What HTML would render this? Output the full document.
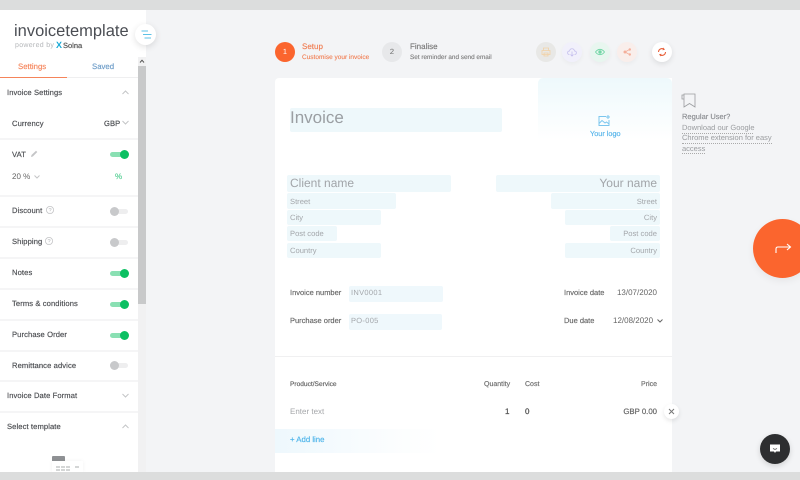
<!DOCTYPE html>
<html><head><meta charset="utf-8">
<style>
*{box-sizing:border-box}
html,body{margin:0;padding:0}
body{width:800px;height:480px;overflow:hidden;background:#f3f4f6;position:relative;font-family:"Liberation Sans",sans-serif;color:#555;text-rendering:geometricPrecision}
#w{position:absolute;left:0;top:0;width:800px;height:480px;filter:blur(.35px)}
.a{position:absolute;white-space:nowrap}
.f{position:absolute;background:#eef8fb;border-radius:2px}
.row{font-size:7.6px;color:#4d4f53;letter-spacing:.1px;line-height:10px;margin-top:1px;-webkit-text-stroke:.18px #4d4f53}
.line{position:absolute;left:0;width:138px;height:2px;background:#f5f5f6}
.tg{position:absolute;left:110px;width:18px;height:5px;border-radius:3px}
.tg i{position:absolute;top:-2px;width:9px;height:9px;border-radius:50%;display:block}
.on{background:#8ae0b3}.on i{left:10px;background:#0cc062}
.off{background:#eeeeef}.off i{left:0;background:#c8c9cb}
.lab{font-size:7.5px;color:#666;line-height:10px;-webkit-text-stroke:.15px #666}
.fl{color:#a3a6aa;font-size:7.6px;line-height:10px;margin-top:1px}
.c{position:absolute;border-radius:50%}
.th{font-size:7px;color:#666;line-height:9px;margin-top:1px;-webkit-text-stroke:.18px #666}
svg{position:absolute;overflow:visible;fill:none}
</style></head>
<body><div id="w">
<!-- frame bars -->
<div class="a" style="left:0;top:0;width:800px;height:10px;background:#dcdddd"></div>
<div class="a" style="left:0;top:472px;width:800px;height:8px;background:#dcdddd;z-index:5"></div>

<!-- sidebar -->
<div class="a" style="left:0;top:10px;width:146px;height:462px;background:#fff"></div>
<div class="a" style="left:138px;top:57px;width:8px;height:415px;background:#f1f1f2"></div>
<div class="a" style="left:138px;top:66px;width:8px;height:238px;background:#c8c9ca"></div>
<svg style="left:139px;top:59px" width="6" height="4"><path d="M1 3.5L3 1.2L5 3.5" stroke="#555" stroke-width="1"/></svg>
<div class="a" style="left:14px;top:22px;font-size:16.5px;color:#4b4e54;line-height:18px">invoicetemplate</div>
<div class="a" style="left:15px;top:41px;font-size:7px;color:#b4b6b9;line-height:9px;letter-spacing:.3px">powered by</div>
<div class="a" style="left:56px;top:40px;font-size:9px;font-weight:bold;color:#17a9d6;line-height:10px">X</div>
<div class="a" style="left:63px;top:41px;font-size:7.5px;color:#555;line-height:9px;-webkit-text-stroke:.2px #555">Solna</div>
<div class="c" style="left:135px;top:24px;width:21px;height:21px;background:#fff;box-shadow:0 2px 7px rgba(0,0,0,.12)"></div>
<svg style="left:141px;top:30px" width="11" height="9"><path d="M0.5 1H7M2 4.5H10.5M3.5 8H10" stroke="#5cc2e6" stroke-width="1"/></svg>

<div class="a" style="left:18px;top:62px;font-size:7.8px;color:#f5845a;line-height:10px;-webkit-text-stroke:.15px #f5845a">Settings</div>
<div class="a" style="left:92px;top:62px;font-size:7.8px;color:#6c9cc8;line-height:10px;-webkit-text-stroke:.15px #6c9cc8">Saved</div>
<div class="a" style="left:0;top:77px;width:138px;height:1px;background:#efeff0"></div>
<div class="a" style="left:0;top:77px;width:67px;height:1px;background:#f5845a"></div>

<div class="a row" style="left:7px;top:87px">Invoice Settings</div>
<svg style="left:122px;top:90px" width="7" height="5"><path d="M.5 4L3.5 1L6.5 4" stroke="#c4c5c7"/></svg>
<div class="a row" style="left:12px;top:118px">Currency</div>
<div class="a row" style="left:104px;top:118px">GBP</div>
<svg style="left:122px;top:120px" width="7" height="5"><path d="M.5 1L3.5 4L6.5 1" stroke="#c4c5c7"/></svg>
<div class="line" style="top:138px"></div>

<div class="a row" style="left:12px;top:149px">VAT</div>
<svg style="left:30px;top:150px" width="8" height="8"><path d="M1 7L1.5 5L6 .8L7.3 2L2.8 6.5Z" fill="#c4c5c7"/></svg>
<div class="tg on" style="top:152px"><i></i></div>
<div class="a" style="left:12px;top:172px;font-size:8px;color:#666;line-height:10px">20 %</div>
<svg style="left:34px;top:175px" width="6" height="4"><path d="M.5 .5L3 3L5.5 .5" stroke="#c4c5c7"/></svg>
<div class="a" style="left:115px;top:172px;font-size:8px;color:#5fd19a;line-height:10px;-webkit-text-stroke:.2px #5fd19a">%</div>
<div class="line" style="top:195px"></div>

<div class="a row" style="left:12px;top:205px">Discount</div>
<svg style="left:46px;top:206px" width="8" height="8"><circle cx="4" cy="4" r="3.6" stroke="#c4c5c7" stroke-width=".8"/><path d="M3 3.2C3 2 5.2 2 5.2 3.2C5.2 4 4 4 4 5M4 5.8V6.3" stroke="#c4c5c7" stroke-width=".7"/></svg>
<div class="tg off" style="top:209px"><i></i></div>
<div class="line" style="top:226px"></div>

<div class="a row" style="left:12px;top:236px">Shipping</div>
<svg style="left:45px;top:237px" width="8" height="8"><circle cx="4" cy="4" r="3.6" stroke="#c4c5c7" stroke-width=".8"/><path d="M3 3.2C3 2 5.2 2 5.2 3.2C5.2 4 4 4 4 5M4 5.8V6.3" stroke="#c4c5c7" stroke-width=".7"/></svg>
<div class="tg off" style="top:240px"><i></i></div>
<div class="line" style="top:257px"></div>

<div class="a row" style="left:12px;top:267px">Notes</div>
<div class="tg on" style="top:271px"><i></i></div>
<div class="line" style="top:288px"></div>

<div class="a row" style="left:12px;top:298px">Terms &amp; conditions</div>
<div class="tg on" style="top:302px"><i></i></div>
<div class="line" style="top:319px"></div>

<div class="a row" style="left:12px;top:329px">Purchase Order</div>
<div class="tg on" style="top:333px"><i></i></div>
<div class="line" style="top:350px"></div>

<div class="a row" style="left:12px;top:360px">Remittance advice</div>
<div class="tg off" style="top:363px"><i></i></div>
<div class="line" style="top:380px"></div>

<div class="a row" style="left:7px;top:390px">Invoice Date Format</div>
<svg style="left:122px;top:393px" width="7" height="5"><path d="M.5 1L3.5 4L6.5 1" stroke="#c4c5c7"/></svg>
<div class="line" style="top:411px"></div>

<div class="a row" style="left:7px;top:421px">Select template</div>
<svg style="left:122px;top:424px" width="7" height="5"><path d="M.5 4L3.5 1L6.5 4" stroke="#c4c5c7"/></svg>
<div class="a" style="left:52px;top:456px;width:13px;height:6px;background:#8f9194;border-radius:1px"></div>
<div class="a" style="left:52px;top:461px;width:31px;height:11px;background:#fff;box-shadow:0 0 4px rgba(0,0,0,.05)"></div>
<svg style="left:56px;top:466px" width="26" height="6"><path d="M0 1H14M0 4H14M19 1H24" stroke="#8f9194" stroke-width=".8" stroke-dasharray="4 1"/></svg>

<!-- stepper -->
<div class="c" style="left:275px;top:42px;width:20px;height:20px;background:#fb652e"></div>
<div class="a" style="left:275px;top:47px;width:20px;text-align:center;font-size:7.5px;color:#fff;line-height:10px">1</div>
<div class="a" style="left:302px;top:42px;font-size:8px;color:#f07d52;line-height:10px;-webkit-text-stroke:.15px #f07d52">Setup</div>
<div class="a" style="left:302px;top:53px;font-size:6.5px;color:#f07d52;line-height:9px;-webkit-text-stroke:.1px #f07d52">Customise your invoice</div>
<div class="c" style="left:382px;top:42px;width:20px;height:20px;background:#e7e8ea"></div>
<div class="a" style="left:382px;top:47px;width:20px;text-align:center;font-size:7.5px;color:#666;line-height:10px">2</div>
<div class="a" style="left:410px;top:42px;font-size:8px;color:#777;line-height:10px;-webkit-text-stroke:.15px #777">Finalise</div>
<div class="a" style="left:410px;top:53px;font-size:6.4px;color:#777;line-height:9px;-webkit-text-stroke:.1px #777">Set reminder and send email</div>

<!-- action buttons -->
<div class="c" style="left:536px;top:42px;width:20px;height:20px;background:#e8e8e6"></div>
<svg style="left:541px;top:47px;opacity:.75" width="10" height="10"><path d="M2.5 3.5V1H7.5V3.5M1 3.5H9V7.5H1ZM3 6H7V9H3Z" stroke="#f3c88f" stroke-width=".8"/></svg>
<div class="c" style="left:562px;top:42px;width:20px;height:20px;background:#f1f0fb;box-shadow:0 2px 5px rgba(0,0,0,.04)"></div>
<svg style="left:567px;top:47px;opacity:.8" width="10" height="10"><path d="M2.5 7.5C0 7.5 0 4 2.5 4C3 1 7 1 7.5 4C10 4 10 7.5 7.5 7.5M5 4.5V9M3.5 7.5L5 9L6.5 7.5" stroke="#b9b2ea" stroke-width=".8"/></svg>
<div class="c" style="left:590px;top:42px;width:20px;height:20px;background:#e8f6ef;box-shadow:0 2px 5px rgba(0,0,0,.04)"></div>
<svg style="left:595px;top:48px;opacity:.85" width="10" height="8"><path d="M.5 4C3 .5 7 .5 9.5 4C7 7.5 3 7.5 .5 4Z" stroke="#5fd19a" stroke-width=".9"/><circle cx="5" cy="4" r="1.7" fill="#5fd19a"/></svg>
<div class="c" style="left:617px;top:42px;width:20px;height:20px;background:#f9eeeb;box-shadow:0 2px 5px rgba(0,0,0,.04)"></div>
<svg style="left:623px;top:48px;opacity:.85" width="9" height="8"><path d="M6.5 1.5L2 4L6.5 6.5" stroke="#f4a48c" stroke-width=".8"/><circle cx="2" cy="4" r="1.5" fill="#f4a48c"/><circle cx="6.8" cy="1.5" r="1.2" fill="#f4a48c"/><circle cx="6.8" cy="6.5" r="1.2" fill="#f4a48c"/></svg>
<div class="c" style="left:652px;top:42px;width:20px;height:20px;background:#fff;box-shadow:0 2px 6px rgba(0,0,0,.1)"></div>
<svg style="left:657px;top:47px" width="10" height="10"><path d="M1.5 5A3.5 3.5 0 0 1 7 2.2M8.5 5A3.5 3.5 0 0 1 3 7.8" stroke="#e8603a" stroke-width="1.1"/><path d="M6.2 .5L8 2.8L5.5 3.2ZM3.8 9.5L2 7.2L4.5 6.8Z" fill="#e8603a"/></svg>

<!-- paper -->
<div class="a" style="left:275px;top:78px;width:397px;height:394px;background:#fff;border-radius:4px 0 0 0"></div>
<div class="a" style="left:538px;top:78px;width:134px;height:62px;border-radius:5px 5px 0 0;background:linear-gradient(#eef9fc,#fff)"></div>
<svg style="left:598px;top:115px" width="13" height="12"><path d="M8 1.5H1V10.5H11V5M1 8.5L4 5.5L7 8L8.5 7L11 9" stroke="#7cc6ee"/><path d="M10 0V4M8 2H12" stroke="#7cc6ee"/></svg>
<div class="a" style="left:590px;top:129px;font-size:7.3px;color:#55b4ea;line-height:10px;-webkit-text-stroke:.15px #55b4ea">Your logo</div>

<div class="f" style="left:290px;top:108px;width:212px;height:24px"></div>
<div class="a" style="left:290px;top:108px;font-size:17px;color:#9b9fa3;line-height:20px">Invoice</div>

<div class="f" style="left:287px;top:175px;width:164px;height:17px"></div>
<div class="a" style="left:290px;top:176px;font-size:12px;color:#a2a5a9;line-height:14px">Client name</div>
<div class="f" style="left:287px;top:193px;width:109px;height:16px"></div><div class="a fl" style="left:290px;top:196px">Street</div>
<div class="f" style="left:287px;top:210px;width:94px;height:15px"></div><div class="a fl" style="left:290px;top:212px">City</div>
<div class="f" style="left:287px;top:226px;width:50px;height:15px"></div><div class="a fl" style="left:290px;top:228px">Post code</div>
<div class="f" style="left:287px;top:243px;width:94px;height:15px"></div><div class="a fl" style="left:290px;top:245px">Country</div>

<div class="f" style="left:496px;top:175px;width:164px;height:17px"></div>
<div class="a" style="right:143px;top:176px;font-size:12px;color:#a2a5a9;line-height:14px">Your name</div>
<div class="f" style="left:551px;top:193px;width:109px;height:16px"></div><div class="a fl" style="right:143px;top:196px">Street</div>
<div class="f" style="left:565px;top:210px;width:95px;height:15px"></div><div class="a fl" style="right:143px;top:212px">City</div>
<div class="f" style="left:610px;top:226px;width:50px;height:15px"></div><div class="a fl" style="right:143px;top:228px">Post code</div>
<div class="f" style="left:565px;top:243px;width:95px;height:15px"></div><div class="a fl" style="right:143px;top:245px">Country</div>

<div class="a lab" style="left:290px;top:288px">Invoice number</div>
<div class="f" style="left:349px;top:286px;width:94px;height:16px;background:#eff8fc"></div>
<div class="a fl" style="left:351px;top:288px;font-size:7.5px;letter-spacing:.3px;margin-top:0">INV0001</div>
<div class="a lab" style="left:290px;top:316px">Purchase order</div>
<div class="f" style="left:349px;top:314px;width:93px;height:16px;background:#eff8fc"></div>
<div class="a fl" style="left:351px;top:316px;font-size:7.5px;letter-spacing:.3px;margin-top:0">PO-005</div>

<div class="a lab" style="left:564px;top:288px">Invoice date</div>
<div class="a" style="right:143px;top:288px;color:#666;font-size:8px;line-height:10px">13/07/2020</div>
<div class="a lab" style="left:564px;top:316px">Due date</div>
<div class="a" style="left:613px;top:316px;color:#666;font-size:8px;line-height:10px">12/08/2020</div>
<svg style="left:657px;top:319px" width="6" height="4"><path d="M.5 .5L3 3L5.5 .5" stroke="#666"/></svg>

<div class="a" style="left:275px;top:356px;width:397px;height:1px;background:#f0f0f1"></div>

<div class="a th" style="left:290px;top:379px;font-size:6.6px">Product/Service</div>
<div class="a th" style="left:484px;top:379px;color:#777">Quantity</div>
<div class="a th" style="left:525px;top:379px;color:#777">Cost</div>
<div class="a th" style="right:143px;top:379px;color:#777">Price</div>
<div class="a" style="left:290px;top:407px;font-size:8px;color:#a5a7aa;line-height:10px">Enter text</div>
<div class="a" style="left:505px;top:407px;font-size:8px;color:#555;line-height:10px;-webkit-text-stroke:.25px #555">1</div>
<div class="a" style="left:525px;top:407px;font-size:8px;color:#555;line-height:10px;-webkit-text-stroke:.25px #555">0</div>
<div class="a" style="right:143px;top:407px;font-size:7.8px;color:#666;line-height:10px;-webkit-text-stroke:.2px #666">GBP 0.00</div>
<div class="c" style="left:664px;top:404px;width:15px;height:15px;background:#fff;box-shadow:0 2px 5px rgba(0,0,0,.1)"></div>
<svg style="left:669px;top:409px" width="5" height="5"><path d="M0 0L5 5M5 0L0 5" stroke="#777"/></svg>
<div class="a" style="left:275px;top:429px;width:165px;height:24px;background:linear-gradient(90deg,#eef8fd,#fbfdfe 70%,#fff)"></div>
<div class="a" style="left:290px;top:435px;font-size:7.8px;color:#4db4ea;line-height:10px;-webkit-text-stroke:.15px #4db4ea">+ Add line</div>

<!-- right note -->
<svg style="left:681px;top:93px" width="15" height="15"><path d="M3 1H14V14L8.5 10.5L3 14ZM3 2H1V6H3" stroke="#9a9c9f" stroke-width=".8"/></svg>
<div class="a" style="left:682px;top:112px;font-size:7.5px;color:#8a8c90;line-height:10px;-webkit-text-stroke:.15px #8a8c90">Regular User?</div>
<div class="a" style="left:682px;top:123px;width:71px;font-size:7.5px;color:#9a9c9f;line-height:10px;border-bottom:1px dotted #aaa">Download our Google</div>
<div class="a" style="left:682px;top:133px;font-size:7.5px;color:#9a9c9f;line-height:10px;border-bottom:1px dotted #aaa">Chrome extension for easy</div>
<div class="a" style="left:682px;top:144px;font-size:7.5px;color:#9a9c9f;line-height:9px;border-bottom:1px dotted #aaa">access</div>

<!-- next button -->
<div class="c" style="left:753px;top:219px;width:59px;height:59px;background:#fb652e;box-shadow:0 3px 8px rgba(0,0,0,.06)"></div>
<svg style="left:775px;top:243px" width="16" height="11"><path d="M1 10V6Q1 4 3 4H15M12 1L15.5 4L12 7" stroke="#fff" stroke-width="1.1"/></svg>

<!-- chat -->
<div class="c" style="left:760px;top:434px;width:30px;height:30px;background:#2d2e30;box-shadow:0 2px 6px rgba(0,0,0,.15);z-index:6"></div>
<svg style="left:770px;top:444px;z-index:7" width="10" height="10"><path d="M0 .5H10V7.5H6L5 9L4 7.5H0Z" fill="#fff"/><path d="M3 4.5Q5 6 7 4.5" stroke="#2d2e30" stroke-width=".7"/></svg>
</div></body></html>
